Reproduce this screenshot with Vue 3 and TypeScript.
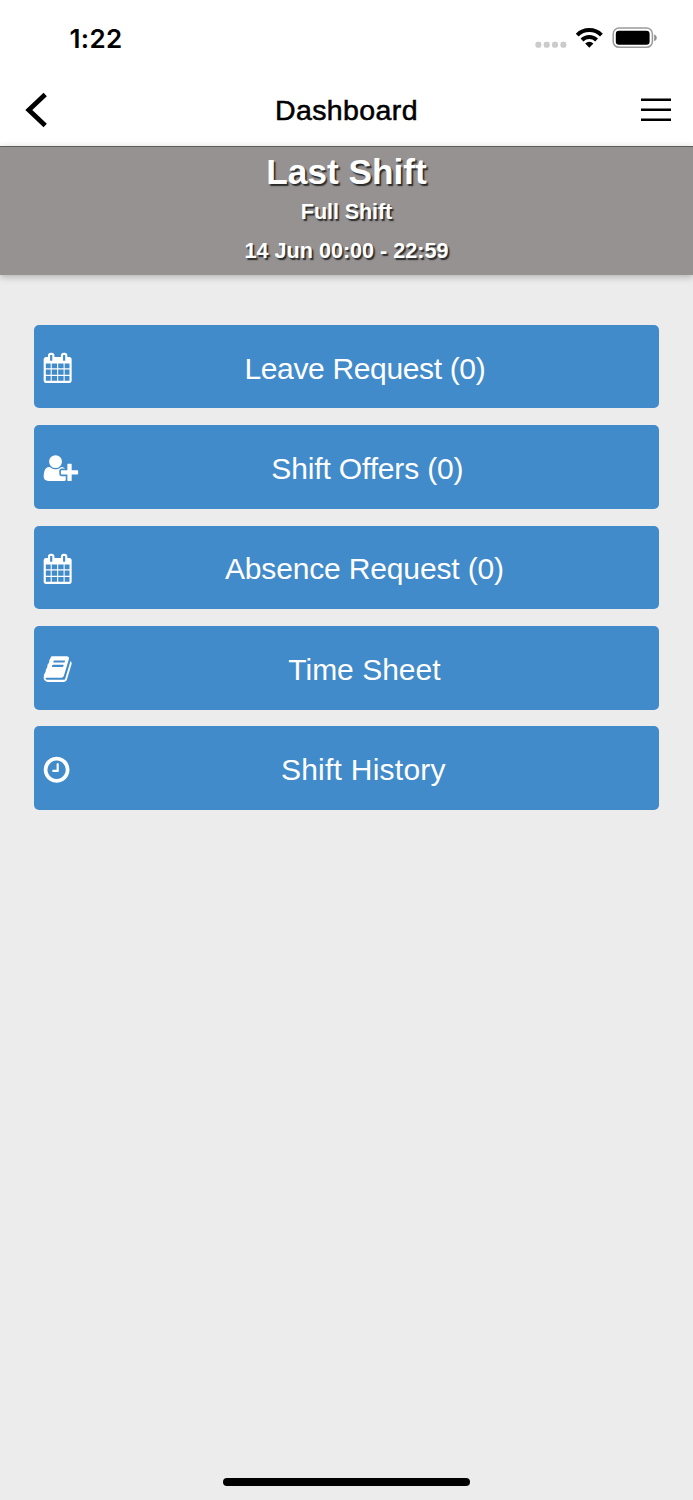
<script setup lang="ts">
interface Icon {
  viewBox: string
  width: number
  path: string
}

interface MenuItem {
  label: string
  icon: Icon
  tone: string
}

const calendar: Icon = {
  viewBox: '84 14 1664 1792',
  width: 28,
  path: 'M192 1664h288v-288h-288v288zm352 0h320v-288h-320v288zm-352-352h288v-320h-288v320zm352 0h320v-320h-320v320zm-352-384h288v-288h-288v288zm736 736h320v-288h-320v288zm-384-736h320v-288h-320v288zm768 736h288v-288h-288v288zm-384-352h320v-320h-320v320zm-352-864v-288q0-13-9.5-22.5t-22.5-9.5h-64q-13 0-22.5 9.5t-9.5 22.5v288q0 13 9.5 22.5t22.5 9.5h64q13 0 22.5-9.5t9.5-22.5zm736 864h288v-320h-288v320zm-384-384h320v-288h-320v288zm384 0h288v-288h-288v288zm32-480v-288q0-13-9.5-22.5t-22.5-9.5h-64q-13 0-22.5 9.5t-9.5 22.5v288q0 13 9.5 22.5t22.5 9.5h64q13 0 22.5-9.5t9.5-22.5zm384-64v1280q0 52-38 90t-90 38h-1408q-52 0-90-38t-38-90v-1280q0-52 38-90t90-38h128v-96q0-66 47-113t113-47h64q66 0 113 47t47 113v96h384v-96q0-66 47-113t113-47h64q66 0 113 47t47 113v96h128q52 0 90 38t38 90z',
}

const userPlus: Icon = {
  viewBox: '20 0 2048 1792',
  width: 34.5,
  path: 'M704 896q-159 0-271.5-112.5t-112.5-271.5 112.5-271.5 271.5-112.5 271.5 112.5 112.5 271.5-112.5 271.5-271.5 112.5zm960 128h352q13 0 22.5 9.5t9.5 22.5v192q0 13-9.5 22.5t-22.5 9.5h-352v352q0 13-9.5 22.5t-22.5 9.5h-192q-13 0-22.5-9.5t-9.5-22.5v-352h-352q-13 0-22.5-9.5t-9.5-22.5v-192q0-13 9.5-22.5t22.5-9.5h352v-352q0-13 9.5-22.5t22.5-9.5h192q13 0 22.5 9.5t9.5 22.5v352zm-736 224q0 52 38 90t90 38h256v238q-68 50-171 50h-874q-121 0-194-69t-73-190q0-53 3.5-103.5t14-109 26.5-108.5 43-97.5 62-81 85.5-53.5 111.5-20q19 0 39 17 79 61 154.5 91.5t164.5 30.5 164.5-30.5 154.5-91.5q20-17 39-17 132 0 217 96h-223q-52 0-90 38t-38 90v192z',
}

const book: Icon = {
  viewBox: '84 0 1664 1792',
  width: 28,
  path: 'M1703 478q40 57 18 129l-275 906q-19 64-76.5 107.5t-122.5 43.5h-923q-77 0-148.5-53.5t-99.5-131.5q-24-67-2-127 0-4 3-27t4-37q1-8-3-21.5t-3-19.5q2-11 8-21t16.5-23.5 16.5-23.5q23-38 45-91.5t30-91.5q3-10 .5-30t-.5-28q3-11 17-28t17-23q21-36 42-92t25-90q1-9-2.5-32t.5-28q4-13 22-30.5t22-22.5q19-26 42.5-84.5t27.5-96.5q1-8-3-25.5t-2-26.5q2-8 9-18t18-23 17-21q8-12 16.5-30.5t15-35 16-36 19.5-32 26.5-23.5 36-11.5 47.5 5.5l-1 3q38-9 51-9h761q74 0 114 56t18 130l-274 906q-36 119-71.5 153.5t-128.5 34.5h-869q-27 0-38 15-11 16-1 43 24 70 144 70h923q29 0 56-15.5t35-41.5l300-987q7-22 5-57 38 15 59 43zm-1064 2q-4 13 2 22.5t20 9.5h608q13 0 25.5-9.5t16.5-22.5l21-64q4-13-2-22.5t-20-9.5h-608q-13 0-25.5 9.5t-16.5 22.5zm-83 256q-4 13 2 22.5t20 9.5h608q13 0 25.5-9.5t16.5-22.5l21-64q4-13-2-22.5t-20-9.5h-608q-13 0-25.5 9.5t-16.5 22.5z',
}

const clock: Icon = {
  viewBox: '148 20 1536 1792',
  width: 25.9,
  path: 'M1024 544v448q0 14-9 23t-23 9h-320q-14 0-23-9t-9-23v-64q0-14 9-23t23-9h224v-352q0-14 9-23t23-9h64q14 0 23 9t9 23zm416 352q0-148-73-273t-198-198-273-73-273 73-198 198-73 273 73 273 198 198 273 73 273-73 198-198 73-273zm224 0q0 209-103 385.5t-279.5 279.5-385.5 103-385.5-103-279.5-279.5-103-385.5 103-385.5 279.5-279.5 385.5-103 385.5 103 279.5 279.5 103 385.5z',
}

const items: MenuItem[] = [
  { label: 'Leave Request (0)', icon: calendar, tone: 'snug' },
  { label: 'Shift Offers (0)', icon: userPlus, tone: 'inset' },
  { label: 'Absence Request (0)', icon: calendar, tone: 'even' },
  { label: 'Time Sheet', icon: book, tone: 'plain' },
  { label: 'Shift History', icon: clock, tone: 'airy' },
]
</script>

<template>
  <div class="screen">
    <header class="top">
      <div class="status">
        <span class="time">1:22</span>
        <svg class="indicators" width="124" height="24" viewBox="534 26 124 24">
          <g fill="#cbcbcb">
            <rect x="535.4" y="41.8" width="6" height="6" rx="2.2" />
            <rect x="543.7" y="41.8" width="6" height="6" rx="2.2" />
            <rect x="552" y="41.8" width="6" height="6" rx="2.2" />
            <rect x="560.4" y="41.8" width="6" height="6" rx="2.2" />
          </g>
          <g fill="none" stroke="#000" stroke-width="4">
            <path d="M577.2 35.1a17.2 17.2 0 0 1 24.2 0" />
            <path d="M582 40a10.4 10.4 0 0 1 14.6 0" />
          </g>
          <path d="M585.2 43.4a5.9 5.9 0 0 1 8.2 0l-4.1 4.4z" fill="#000" />
          <rect x="613.2" y="28.1" width="39.2" height="19.2" rx="5.8" fill="#fff" stroke="#9a9a9a" stroke-width="1.5" />
          <rect x="615.8" y="30.8" width="33.8" height="13.9" rx="3.2" fill="#000" />
          <path d="M654.2 34.3q2.6 1 2.6 3.5t-2.6 3.5z" fill="#8f8f8f" />
        </svg>
      </div>
      <nav class="bar">
        <svg class="back" width="24" height="36" viewBox="24 92 24 36">
          <path d="M45.2 94.5 28.8 110l16.4 15.5" fill="none" stroke="#000" stroke-width="4.8" />
        </svg>
        <h1 class="title">Dashboard</h1>
        <svg class="burger" width="30" height="26" viewBox="641 97 30 26">
          <path d="M641 99.7h30M641 109.8h30M641 119.8h30" stroke="#000" stroke-width="2.6" />
        </svg>
      </nav>
    </header>

    <section class="shift">
      <h2 class="shift-title">Last Shift</h2>
      <p class="shift-kind">Full Shift</p>
      <p class="shift-when">14 Jun 00:00 - 22:59</p>
    </section>

    <main class="menu">
      <button v-for="item in items" :key="item.label" class="entry" type="button">
        <svg class="icon" :width="item.icon.width" height="30.15" :viewBox="item.icon.viewBox">
          <path :d="item.icon.path" fill="#fff" />
        </svg>
        <span class="label" :class="item.tone">{{ item.label }}</span>
      </button>
    </main>

    <footer class="home"><span class="home-line"></span></footer>
  </div>
</template>

<style>
body {
  margin: 0;
  background: #ececec;
}
</style>

<style scoped>
.screen {
  display: flex;
  flex-direction: column;
  box-sizing: border-box;
  height: 1500px;
  background: #ececec;
  color: #000;
  font-family: 'Liberation Sans', Arial, sans-serif;
}

.top {
  height: 146px;
  background: #fff;
}

.status {
  display: flex;
  justify-content: space-between;
  align-items: center;
  height: 76px;
  padding: 0 35px 0 69.5px;
}

.time {
  padding-top: 1px;
  font: 600 26px/30px Inter, sans-serif;
  letter-spacing: 0.35px;
}

.bar {
  display: grid;
  grid-template-columns: 1fr auto 1fr;
  align-items: center;
  height: 68px;
  padding: 0 22px 0 24px;
}

.title {
  margin: 0 2px 0 0;
  font-size: 28.5px;
  font-weight: 400;
  line-height: 34px;
  letter-spacing: 0.4px;
  -webkit-text-stroke: 0.55px #000;
}

.burger {
  justify-self: end;
}

.shift {
  box-sizing: border-box;
  height: 128.5px;
  padding-top: 5px;
  border-top: 1.5px solid #5f5c5b;
  background: #969291;
  box-shadow: 0 2px 7px rgba(0, 0, 0, 0.25);
  color: #fff;
  text-align: center;
  font-weight: 700;
  text-shadow: 1.7px 1.7px 1.2px #2a2a2a;
}

.shift-title {
  margin: 0 0 2.4px;
  font-size: 35.2px;
  line-height: 39px;
}

.shift-kind,
.shift-when {
  margin: 0;
  font-size: 21.6px;
  line-height: 38.5px;
}

.shift-kind {
  letter-spacing: -0.1px;
}

.menu {
  display: flex;
  flex-direction: column;
  gap: 16.75px;
  padding: 50.2px 33.7px 0;
}

.entry {
  display: grid;
  grid-template-columns: 36.8px 1fr;
  align-items: center;
  height: 83.7px;
  padding: 0 10px;
  border: 0;
  border-radius: 5px;
  background: #428bca;
  color: #fff;
  font-family: inherit;
  font-size: 30px;
}

.icon {
  margin-top: 3px;
  overflow: visible;
}

.label {
  margin-top: 4px;
  line-height: 36px;
  text-align: center;
}

.snug {
  letter-spacing: -0.35px;
}

.inset {
  padding-left: 5px;
  letter-spacing: -0.15px;
}

.even {
  letter-spacing: -0.15px;
  padding-right: 1px;
}

.plain {
  padding-right: 1px;
}

.airy {
  padding-right: 3px;
  letter-spacing: 0.25px;
}

.home {
  display: flex;
  justify-content: center;
  margin-top: auto;
  padding-bottom: 13.7px;
}

.home-line {
  width: 247.5px;
  height: 8.3px;
  border-radius: 5px;
  background: #000;
}
</style>
